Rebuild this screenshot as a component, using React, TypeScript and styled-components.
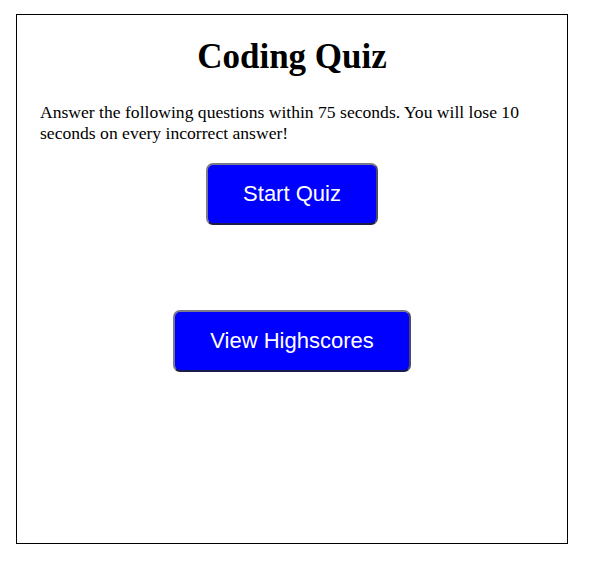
import React from "react";
import styled, { createGlobalStyle } from "styled-components";

const GlobalStyle = createGlobalStyle`
  html, body {
    margin: 0;
    padding: 0;
    background: #ffffff;
  }
  body {
    padding: 14px 0 0 16px;
    font-family: "Liberation Serif", "Times New Roman", serif;
    color: #000;
  }
`;

const Card = styled.main`
  box-sizing: border-box;
  width: 552px;
  height: 530px;
  border: 1px solid #000;
  padding: 0 23px;
  display: flex;
  flex-direction: column;
  align-items: center;
`;

const Title = styled.h1`
  margin: 22px 0 0;
  font-size: 35px;
  line-height: 40px;
  font-weight: bold;
  text-align: center;
`;

const Intro = styled.p`
  align-self: stretch;
  margin: 25px 0 0;
  font-size: 17.6px;
  line-height: 21px;
`;

const Button = styled.button<{ $top: number }>`
  margin-top: ${(p) => p.$top}px;
  box-sizing: border-box;
  background: #0000ff;
  color: #fff;
  font-family: "Liberation Sans", Arial, sans-serif;
  font-size: 22px;
  line-height: 26px;
  padding: 16px 35px;
  border: 2px solid;
  border-color: #7a7a8a #4a4a6a #1c1c4c #7a7a8a;
  border-radius: 7px;
  cursor: pointer;
`;

export default function App() {
  return (
    <>
      <GlobalStyle />
      <Card>
        <Title>Coding Quiz</Title>
        <Intro>
          Answer the following questions within 75 seconds. You will lose 10
          seconds on every incorrect answer!
        </Intro>
        <Button $top={19}>Start Quiz</Button>
        <Button $top={85}>View Highscores</Button>
      </Card>
    </>
  );
}
